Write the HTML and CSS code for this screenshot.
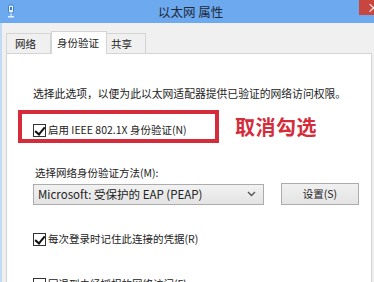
FILE: index.html
```html
<!DOCTYPE html>
<html>
<head>
<meta charset="utf-8">
<link rel="stylesheet" href="styles.css">
</head>
<body>
<div class="window">
  <div class="titlebar">
    <svg class="app-icon" width="8" height="14" viewBox="0 0 8 14">
      <rect x="1.5" y="1" width="5" height="8" rx="1.5" fill="#e8f1fb" stroke="#3d7cc9" stroke-width="1"/>
      <rect x="3" y="3" width="2" height="3" fill="#3d7cc9"/>
      <rect x="3.5" y="9" width="1" height="4" fill="#e8f1fb"/>
      <rect x="1" y="12" width="6" height="1.5" fill="#e8f1fb"/>
    </svg>
    <div class="title">以太网 属性</div>
    <div class="close"><span>×</span></div>
  </div>
  <div class="frame">
    <div class="tabs">
      <div class="tab">网络</div>
      <div class="tab active">身份验证</div>
      <div class="tab">共享</div>
    </div>
    <div class="panel">
      <p class="desc">选择此选项，以便为此以太网适配器提供已验证的网络访问权限。</p>
      <div class="highlight-row">
        <div class="redbox">
          <label class="check"><span class="box checked"></span>启用 IEEE 802.1X 身份验证(N)</label>
        </div>
        <div class="note">取消勾选</div>
      </div>
      <p class="label">选择网络身份验证方法(M):</p>
      <div class="method-row">
        <div class="select">
          <span>Microsoft: 受保护的 EAP (PEAP)</span>
          <svg width="9" height="6" viewBox="0 0 9 6"><path d="M1 1 L4.5 4.5 L8 1" fill="none" stroke="#555" stroke-width="1.4"/></svg>
        </div>
        <div class="button">设置(S)</div>
      </div>
      <label class="check row2"><span class="box checked"></span>每次登录时记住此连接的凭据(R)</label>
      <label class="check row3"><span class="box"></span>回退到未经授权的网络访问(F)</label>
    </div>
  </div>
</div>
</body>
</html>
```
FILE: styles.css
```css
* { box-sizing: border-box; }
html, body { margin: 0; padding: 0; }
body {
  width: 374px;
  height: 282px;
  overflow: hidden;
  background: #f0f0f0;
  font-family: "Noto Sans CJK SC", "Noto Sans", sans-serif;
  font-size: 10.5px;
  color: #222;
}
.window { width: 374px; height: 282px; display: flex; flex-direction: column; }
.titlebar {
  height: 23px;
  background: #6ca9ef;
  display: flex;
  align-items: flex-start;
  flex-shrink: 0;
}
.app-icon { margin: 4px 0 0 7px; }
.title {
  flex: 1;
  padding-left: 143px;
  padding-top: 3px;
  font-size: 12.5px;
  line-height: 17px;
  color: #1f2a3a;
}
.close {
  width: 15px;
  height: 15px;
  background: #c8463d;
  color: #fff;
  font-size: 13px;
  line-height: 13px;
  padding-left: 8px;
  overflow: hidden;
}
.frame {
  flex: 1;
  border-left: 2px solid #c3daf4;
  display: flex;
  flex-direction: column;
}
.tabs {
  display: flex;
  align-items: flex-end;
  padding: 7px 0 0 4px;
  height: 30px;
  position: relative;
  z-index: 1;
}
.tab {
  height: 20px;
  border: 1px solid #d4d4d4;
  border-bottom: none;
  background: #f0f0f0;
  padding: 0 8px;
  line-height: 19px;
  font-size: 10.5px;
}
.tab:first-child { width: 45px; }
.tab.active {
  height: 23px;
  background: #fff;
  width: 56px;
  padding: 0 5px;
  line-height: 21px;
  margin-bottom: -1px;
  border-color: #d4d4d4;
}
.tab:last-child { width: 39px; border-left: none; padding: 0 4px; }
.panel {
  flex: 1;
  margin: 0 2px 0 4px;
  background: #fff;
  border: 1px solid #d4d4d4;
  border-bottom: none;
  padding: 32px 0 0 26px;
}
.desc { margin: 0; line-height: 14px; font-size: 10.8px; }
.highlight-row { display: flex; align-items: center; margin-top: 10px; }
.redbox {
  margin-left: -15px;
  width: 201px;
  height: 33px;
  border: 4px solid #d42c3a;
  padding: 8px 0 0 11px;
}
.check { display: flex; align-items: center; line-height: 16px; white-space: nowrap; }
.box {
  width: 13px;
  height: 13px;
  border: 1px solid #333;
  background: #fff;
  margin-right: 2px;
  position: relative;
  flex-shrink: 0;
}
.box.checked::after {
  content: "";
  position: absolute;
  left: 3px;
  top: 0px;
  width: 4px;
  height: 8px;
  border: solid #111;
  border-width: 0 2px 2px 0;
  transform: rotate(40deg);
}
.note {
  margin-left: 16px;
  color: #d42c3a;
  font-weight: 700;
  font-size: 20px;
  line-height: 24px;
  letter-spacing: 0.5px;
}
.label { margin: 23px 0 0 2px; line-height: 14px; }
.method-row { display: flex; align-items: center; margin-top: 3px; }
.select {
  width: 231px;
  height: 21px;
  border: 1px solid #acacac;
  background: linear-gradient(#f2f2f2, #e3e3e3);
  display: flex;
  align-items: center;
  justify-content: space-between;
  padding: 0 7px 0 4px;
  font-size: 11.5px;
}
.button {
  margin-left: 17px;
  width: 78px;
  height: 22px;
  border: 1px solid #acacac;
  background: linear-gradient(#f0f0f0, #e4e4e4);
  text-align: center;
  line-height: 20px;
}
.row2 { margin-top: 26px; }
.row3 { margin-top: 29px; }
```
